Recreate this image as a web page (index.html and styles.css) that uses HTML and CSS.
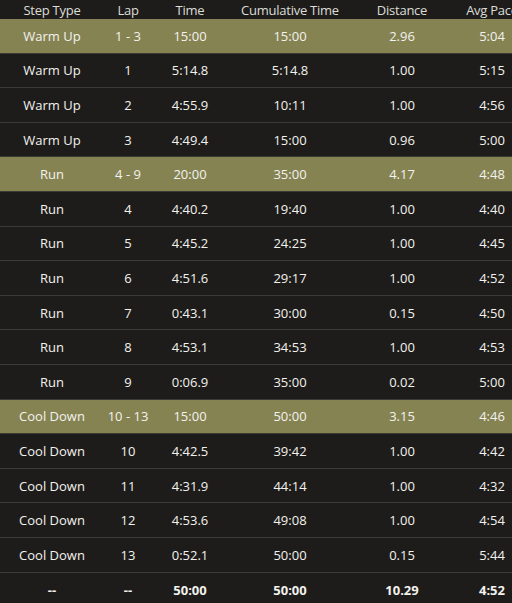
FILE: index.html
```html
<!DOCTYPE html>
<html>
<head>
<meta charset="utf-8">
<link rel="stylesheet" href="styles.css">
</head>
<body>
<div class="wrap">
  <div class="tbl">
    <div class="row head"><div>Step Type</div><div>Lap</div><div>Time</div><div>Cumulative Time</div><div>Distance</div><div>Avg Pace</div></div>
    <div class="row sum"><div>Warm Up</div><div>1 - 3</div><div>15:00</div><div>15:00</div><div>2.96</div><div>5:04</div></div>
    <div class="row"><div>Warm Up</div><div>1</div><div>5:14.8</div><div>5:14.8</div><div>1.00</div><div>5:15</div></div>
    <div class="row"><div>Warm Up</div><div>2</div><div>4:55.9</div><div>10:11</div><div>1.00</div><div>4:56</div></div>
    <div class="row"><div>Warm Up</div><div>3</div><div>4:49.4</div><div>15:00</div><div>0.96</div><div>5:00</div></div>
    <div class="row sum"><div>Run</div><div>4 - 9</div><div>20:00</div><div>35:00</div><div>4.17</div><div>4:48</div></div>
    <div class="row"><div>Run</div><div>4</div><div>4:40.2</div><div>19:40</div><div>1.00</div><div>4:40</div></div>
    <div class="row"><div>Run</div><div>5</div><div>4:45.2</div><div>24:25</div><div>1.00</div><div>4:45</div></div>
    <div class="row"><div>Run</div><div>6</div><div>4:51.6</div><div>29:17</div><div>1.00</div><div>4:52</div></div>
    <div class="row"><div>Run</div><div>7</div><div>0:43.1</div><div>30:00</div><div>0.15</div><div>4:50</div></div>
    <div class="row"><div>Run</div><div>8</div><div>4:53.1</div><div>34:53</div><div>1.00</div><div>4:53</div></div>
    <div class="row"><div>Run</div><div>9</div><div>0:06.9</div><div>35:00</div><div>0.02</div><div>5:00</div></div>
    <div class="row sum"><div>Cool Down</div><div>10 - 13</div><div>15:00</div><div>50:00</div><div>3.15</div><div>4:46</div></div>
    <div class="row"><div>Cool Down</div><div>10</div><div>4:42.5</div><div>39:42</div><div>1.00</div><div>4:42</div></div>
    <div class="row"><div>Cool Down</div><div>11</div><div>4:31.9</div><div>44:14</div><div>1.00</div><div>4:32</div></div>
    <div class="row"><div>Cool Down</div><div>12</div><div>4:53.6</div><div>49:08</div><div>1.00</div><div>4:54</div></div>
    <div class="row"><div>Cool Down</div><div>13</div><div>0:52.1</div><div>50:00</div><div>0.15</div><div>5:44</div></div>
    <div class="row total"><div>--</div><div>--</div><div>50:00</div><div>50:00</div><div>10.29</div><div>4:52</div></div>
  </div>
</div>
</body>
</html>
```
FILE: styles.css
```css
html, body {
  margin: 0;
  padding: 0;
  background: #1e1c1a;
}
.wrap {
  width: 512px;
  height: 603px;
  overflow: hidden;
}
.tbl {
  width: 532px;
  font-family: "Open Sans", sans-serif;
  font-size: 13px;
  color: #f2f2ee;
}
.row {
  display: grid;
  grid-template-columns: 104px 48px 76px 124px 100px 80px;
  height: 34.6px;
  box-sizing: border-box;
  border-bottom: 1px solid #3b3a37;
  align-items: center;
}
.row > div {
  text-align: center;
  white-space: nowrap;
}
.head {
  height: 19px;
  border-bottom: none;
  color: #dcdcd8;
  letter-spacing: -0.25px;
}
.sum {
  background: #868353;
}
.total {
  font-weight: 700;
  border-bottom: none;
}
```
